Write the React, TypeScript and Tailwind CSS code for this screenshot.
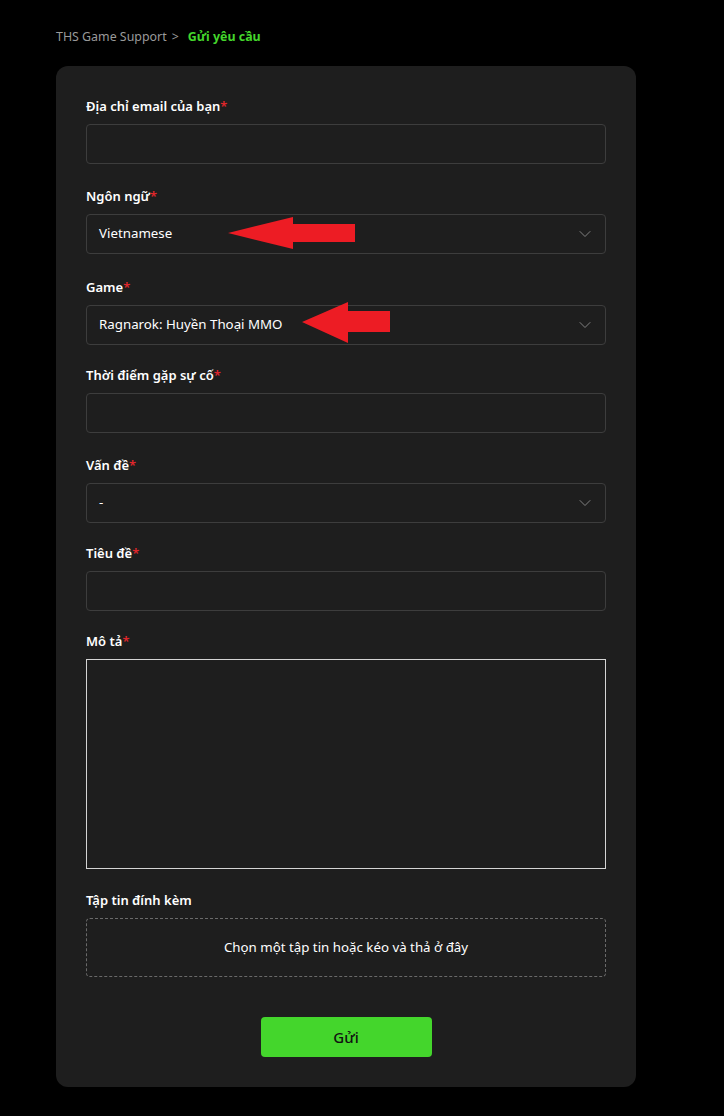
import { ChevronDown } from 'lucide-react'

const font = { fontFamily: '"Noto Sans", "Open Sans", sans-serif' }

function Label({ text, required = true }: { text: string; required?: boolean }) {
  return (
    <div className='h-5 mb-2 text-[13px]/[20px] font-semibold text-white'>
      {text}
      {required && <span className='text-[#e0262b]'>*</span>}
    </div>
  )
}

function Input() {
  return <div className='h-10 rounded-[4px] border border-[#3d3d3d] bg-[#1e1e1e]' />
}

function Select({ value }: { value: string }) {
  return (
    <div className='h-10 rounded-[4px] border border-[#3d3d3d] bg-[#1e1e1e] flex items-center justify-between pl-3 pr-[10px]'>
      <span className='text-[13.3px] text-white'>{value}</span>
      <ChevronDown size={20} strokeWidth={1.1} className='text-[#8a8a8a]' />
    </div>
  )
}

export default function App() {
  return (
    <div className='min-h-[1116px] bg-black pt-[27px] pb-[30px] pl-[56px]' style={font}>
      <div className='h-5 mb-[19px] flex items-center text-[12.4px]/[20px]'>
        <span className='text-[#9a9a9a]'>THS Game Support</span>
        <span className='text-[#9a9a9a] ml-[5px]'>&gt;</span>
        <span className='text-[#44d62c] font-bold ml-[9px]'>Gửi yêu cầu</span>
      </div>

      <div className='w-[580px] rounded-[12px] bg-[#1e1e1e] px-[30px] pt-[30px] pb-[30px]'>
        <div className='mb-[22px]'>
          <Label text='Địa chỉ email của bạn' />
          <Input />
        </div>

        <div className='mb-[23px] relative'>
          <Label text='Ngôn ngữ' />
          <Select value='Vietnamese' />
          <svg className='absolute left-[142px] top-[31px]' width='127' height='32' viewBox='0 0 127 32'>
            <polygon points='0,16 65,0 65,7 127,7 127,25 65,25 65,32' fill='#ed1c24' />
          </svg>
        </div>

        <div className='mb-[20px] relative'>
          <Label text='Game' />
          <Select value='Ragnarok: Huyền Thoại MMO' />
          <svg className='absolute left-[216px] top-[25px]' width='88' height='41' viewBox='0 0 88 41'>
            <polygon points='0,20 46,0 46,9 88,9 88,30 46,30 46,41' fill='#ed1c24' />
          </svg>
        </div>

        <div className='mb-[22px]'>
          <Label text='Thời điểm gặp sự cố' />
          <Input />
        </div>

        <div className='mb-[20px]'>
          <Label text='Vấn đề' />
          <Select value='-' />
        </div>

        <div className='mb-[20px]'>
          <Label text='Tiêu đề' />
          <Input />
        </div>

        <div className='mb-[21px]'>
          <Label text='Mô tả' />
          <div className='h-[210px] border border-[#d4d4d4] bg-[#1e1e1e]' />
        </div>

        <div className='mb-[40px]'>
          <Label text='Tập tin đính kèm' required={false} />
          <div className='h-[59px] rounded-[4px] border border-dashed border-[#6a6a6a] flex items-center justify-center text-[13.3px] text-white'>
            Chọn một tập tin hoặc kéo và thả ở đây
          </div>
        </div>

        <div className='flex justify-center'>
          <button className='w-[171px] h-10 rounded-[4px] bg-[#44d62c] text-[15px] font-medium text-[#111]'>
            Gửi
          </button>
        </div>
      </div>
    </div>
  )
}
